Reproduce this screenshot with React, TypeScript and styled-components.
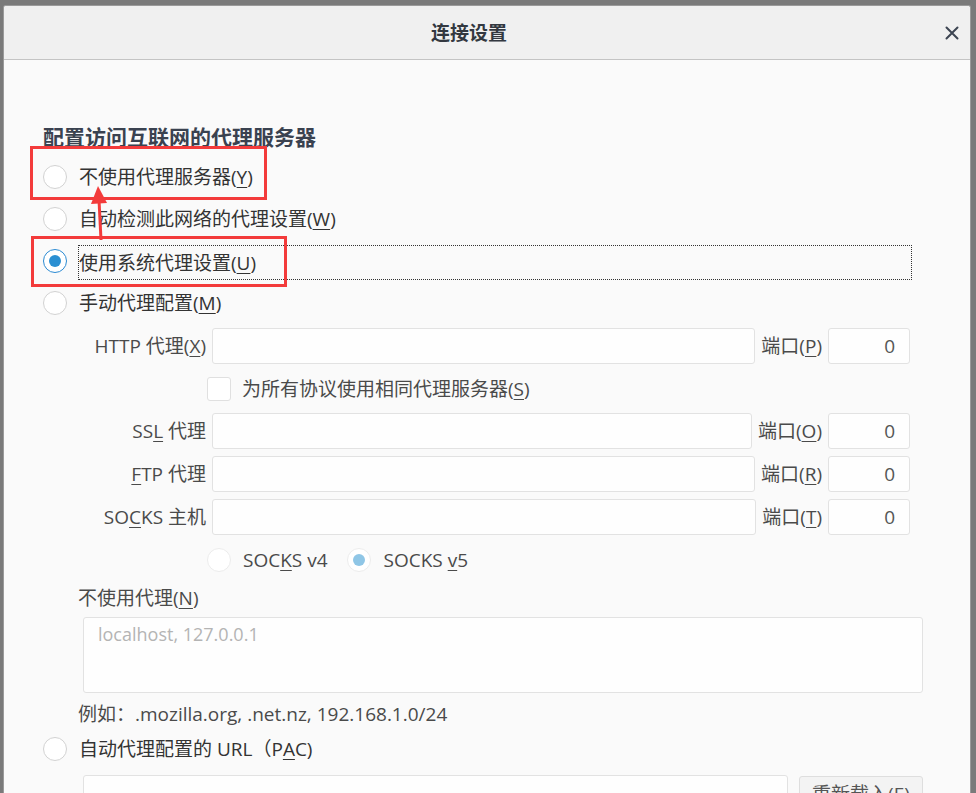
import React from "react";
import styled, { createGlobalStyle } from "styled-components";

const GlobalStyle = createGlobalStyle`
  html, body {
    margin: 0;
    padding: 0;
    height: 793px;
    overflow: hidden;
    background: #7a7a7a;
    font-family: "Open Sans", "Noto Sans CJK SC", sans-serif;
  }
`;

const Page = styled.div`
  position: relative;
  padding: 5px 5px 0 3px;
  height: 788px;
`;

const Dialog = styled.div`
  width: 966px;
  height: 800px;
  background: #fafafa;
  border: 1px solid #9a9a9a;
  border-bottom: none;
  border-radius: 3px 3px 0 0;
  overflow: hidden;
  display: flex;
  flex-direction: column;
`;

const Header = styled.div`
  height: 53px;
  flex: none;
  display: flex;
  align-items: center;
  background: #f0f0f0;
  border-bottom: 1px solid #c4c4c4;
`;

const Title = styled.div`
  flex: 1;
  text-align: center;
  font-size: 19px;
  font-weight: 700;
  color: #333840;
  line-height: 28px;
`;

const CloseButton = styled.div`
  width: 36px;
  height: 36px;
  display: flex;
  align-items: center;
  justify-content: center;
`;

const Body = styled.div`
  padding: 63px 47px 0 39px;
  display: flex;
  flex-direction: column;
`;

const SectionTitle = styled.div`
  font-size: 21px;
  font-weight: 700;
  line-height: 28px;
  color: #3a4250;
  margin-bottom: 5px;
`;

const RadioRow = styled.div<{ $right?: number }>`
  height: 42px;
  display: flex;
  align-items: center;
  margin-right: ${(p) => p.$right ?? 0}px;
`;

const RadioCircle = styled.span<{ $checked?: boolean; $disabled?: boolean }>`
  flex: none;
  width: 24px;
  height: 24px;
  box-sizing: border-box;
  border-radius: 50%;
  background: #fff;
  border: 1px solid
    ${(p) => (p.$checked && !p.$disabled ? "#2b8ad2" : p.$disabled ? "#ececec" : "#d2d2d2")};
  display: flex;
  align-items: center;
  justify-content: center;
  &::after {
    content: "";
    display: ${(p) => (p.$checked ? "block" : "none")};
    width: 12px;
    height: 12px;
    border-radius: 50%;
    background: ${(p) => (p.$disabled ? "#8fc6e6" : "#2a8fd2")};
  }
`;

const RadioLabel = styled.span<{ $focused?: boolean }>`
  margin-left: ${(p) => (p.$focused ? 11 : 12)}px;
  font-size: 19px;
  line-height: 28px;
  color: #333;
  white-space: nowrap;
  ${(p) =>
    p.$focused
      ? `
    flex: 1;
    height: 35px;
    box-sizing: border-box;
    border: 1px dotted #333;
    display: flex;
    align-items: center;
    margin-top: 3px;
  `
      : ""}
`;

const Key = styled.u`
  text-underline-offset: 3px;
  text-decoration-thickness: 1px;
`;

const Manual = styled.div`
  margin: 4px 13px 0 35px;
  display: flex;
  flex-direction: column;
  gap: 7px;
`;

const FieldRow = styled.div`
  height: 36px;
  display: flex;
  align-items: center;
`;

const FieldLabel = styled.span`
  width: 128px;
  flex: none;
  text-align: right;
  font-size: 19px;
  line-height: 28px;
  color: #4a4a4a;
  white-space: nowrap;
`;

const TextInput = styled.div`
  flex: 1;
  height: 36px;
  box-sizing: border-box;
  margin-left: 6px;
  background: #fefefe;
  border: 1px solid #e2e2e2;
  border-radius: 3px;
`;

const PortLabel = styled.span`
  flex: none;
  margin: 0 6px;
  font-size: 19px;
  line-height: 28px;
  color: #4a4a4a;
  white-space: nowrap;
`;

const PortInput = styled.div`
  width: 82px;
  height: 36px;
  flex: none;
  box-sizing: border-box;
  background: #fefefe;
  border: 1px solid #e2e2e2;
  border-radius: 3px;
  text-align: right;
  padding-right: 14px;
  font-size: 19px;
  line-height: 34px;
  color: #555;
`;

const IndentRow = styled.div<{ $h?: number }>`
  height: ${(p) => p.$h ?? 36}px;
  display: flex;
  align-items: center;
  padding-left: 129px;
`;

const CheckBox = styled.span`
  width: 24px;
  height: 24px;
  flex: none;
  box-sizing: border-box;
  background: #fff;
  border: 1px solid #e0e0e0;
  border-radius: 3px;
`;

const OptionText = styled.span<{ $gap: number; $after?: number }>`
  margin-left: ${(p) => p.$gap}px;
  margin-right: ${(p) => p.$after ?? 0}px;
  font-size: 19px;
  line-height: 28px;
  color: #4a4a4a;
  white-space: nowrap;
`;

const SubLabel = styled.div`
  margin: 6px 0 0 35px;
  font-size: 19px;
  line-height: 28px;
  color: #4a4a4a;
`;

const TextArea = styled.div`
  margin: 5px 0 0 40px;
  height: 76px;
  box-sizing: border-box;
  background: #fefefe;
  border: 1px solid #e2e2e2;
  border-radius: 3px;
  padding: 3px 14px;
  font-size: 18px;
  line-height: 26px;
  color: #b4b4b4;
`;

const Example = styled.div`
  margin: 7px 0 0 35px;
  font-size: 19px;
  line-height: 28px;
  color: #4a4a4a;
`;

const PacRow = styled.div`
  margin: 5px 0 0 40px;
  display: flex;
  gap: 11px;
`;

const PacInput = styled.div`
  flex: 1;
  height: 36px;
  box-sizing: border-box;
  background: #fefefe;
  border: 1px solid #e2e2e2;
  border-radius: 3px;
`;

const ReloadButton = styled.div`
  width: 124px;
  height: 36px;
  box-sizing: border-box;
  background: #f3f3f3;
  border: 1px solid #dedede;
  border-radius: 3px;
  text-align: center;
  font-size: 19px;
  line-height: 34px;
  color: #555;
  margin-top: 1px;
`;

const RedBox = styled.div<{ $x: number; $y: number; $w: number; $h: number }>`
  position: absolute;
  left: ${(p) => p.$x}px;
  top: ${(p) => p.$y}px;
  width: ${(p) => p.$w}px;
  height: ${(p) => p.$h}px;
  box-sizing: border-box;
  border: 3px solid #f33b3b;
  pointer-events: none;
`;

const ArrowSvg = styled.svg`
  position: absolute;
  left: 0;
  top: 0;
  pointer-events: none;
`;

export default function App() {
  return (
    <>
      <GlobalStyle />
      <Page>
        <Dialog>
          <Header>
            <Title>连接设置</Title>
            <CloseButton>
              <svg width="14" height="14" viewBox="0 0 14 14">
                <path d="M1.5 1.5 L12.5 12.5 M12.5 1.5 L1.5 12.5" stroke="#3d4552" strokeWidth="2" strokeLinecap="round" />
              </svg>
            </CloseButton>
          </Header>
          <Body>
            <SectionTitle>配置访问互联网的代理服务器</SectionTitle>
            <RadioRow>
              <RadioCircle />
              <RadioLabel>
                不使用代理服务器(<Key>Y</Key>)
              </RadioLabel>
            </RadioRow>
            <RadioRow>
              <RadioCircle />
              <RadioLabel>
                自动检测此网络的代理设置(<Key>W</Key>)
              </RadioLabel>
            </RadioRow>
            <RadioRow $right={11}>
              <RadioCircle $checked />
              <RadioLabel $focused>
                使用系统代理设置(<Key>U</Key>)
              </RadioLabel>
            </RadioRow>
            <RadioRow>
              <RadioCircle />
              <RadioLabel>
                手动代理配置(<Key>M</Key>)
              </RadioLabel>
            </RadioRow>

            <Manual>
              <FieldRow>
                <FieldLabel>
                  HTTP 代理(<Key>X</Key>)
                </FieldLabel>
                <TextInput />
                <PortLabel>
                  端口(<Key>P</Key>)
                </PortLabel>
                <PortInput>0</PortInput>
              </FieldRow>
              <IndentRow $h={35}>
                <CheckBox />
                <OptionText $gap={11}>
                  为所有协议使用相同代理服务器(<Key>S</Key>)
                </OptionText>
              </IndentRow>
              <FieldRow>
                <FieldLabel>
                  SS<Key>L</Key> 代理
                </FieldLabel>
                <TextInput />
                <PortLabel>
                  端口(<Key>O</Key>)
                </PortLabel>
                <PortInput>0</PortInput>
              </FieldRow>
              <FieldRow>
                <FieldLabel>
                  <Key>F</Key>TP 代理
                </FieldLabel>
                <TextInput />
                <PortLabel>
                  端口(<Key>R</Key>)
                </PortLabel>
                <PortInput>0</PortInput>
              </FieldRow>
              <FieldRow>
                <FieldLabel>
                  SO<Key>C</Key>KS 主机
                </FieldLabel>
                <TextInput />
                <PortLabel>
                  端口(<Key>T</Key>)
                </PortLabel>
                <PortInput>0</PortInput>
              </FieldRow>
              <IndentRow>
                <RadioCircle $disabled />
                <OptionText $gap={12} $after={19}>
                  SOC<Key>K</Key>S v4
                </OptionText>
                <RadioCircle $checked $disabled />
                <OptionText $gap={13}>
                  SOCKS <Key>v</Key>5
                </OptionText>
              </IndentRow>
            </Manual>

            <SubLabel>
              不使用代理(<Key>N</Key>)
            </SubLabel>
            <TextArea>localhost, 127.0.0.1</TextArea>
            <Example>例如：.mozilla.org, .net.nz, 192.168.1.0/24</Example>
            <RadioRow>
              <RadioCircle />
              <RadioLabel>
                自动代理配置的 URL（P<Key>A</Key>C)
              </RadioLabel>
            </RadioRow>
            <PacRow>
              <PacInput />
              <ReloadButton>重新载入(E)</ReloadButton>
            </PacRow>
          </Body>
        </Dialog>

        <RedBox $x={30} $y={146} $w={237} $h={54} />
        <RedBox $x={31} $y={236} $w={256} $h={51} />
        <ArrowSvg width="976" height="793" viewBox="0 0 976 793">
          <line x1="101" y1="240" x2="99" y2="200" stroke="#f33b3b" strokeWidth="3" />
          <polygon points="98,186 91,204 107,203" fill="#f33b3b" />
        </ArrowSvg>
      </Page>
    </>
  );
}
